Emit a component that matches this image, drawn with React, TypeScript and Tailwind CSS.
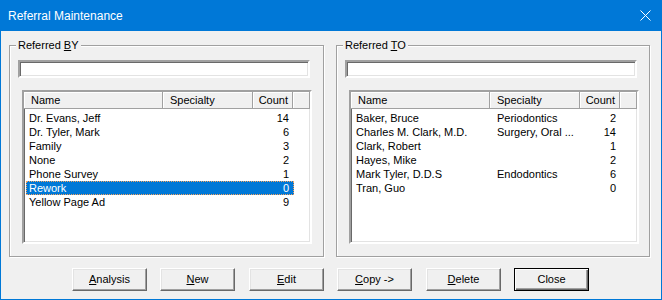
import React from "react";

type Row = { name: string; spec: string; count: string; selected?: boolean };

const leftRows: Row[] = [
  { name: "Dr. Evans, Jeff", spec: "", count: "14" },
  { name: "Dr. Tyler, Mark", spec: "", count: "6" },
  { name: "Family", spec: "", count: "3" },
  { name: "None", spec: "", count: "2" },
  { name: "Phone Survey", spec: "", count: "1" },
  { name: "Rework", spec: "", count: "0", selected: true },
  { name: "Yellow Page Ad", spec: "", count: "9" },
];

const rightRows: Row[] = [
  { name: "Baker, Bruce", spec: "Periodontics", count: "2" },
  { name: "Charles M. Clark, M.D.", spec: "Surgery, Oral ...", count: "14" },
  { name: "Clark, Robert", spec: "", count: "1" },
  { name: "Hayes, Mike", spec: "", count: "2" },
  { name: "Mark Tyler, D.D.S", spec: "Endodontics", count: "6" },
  { name: "Tran, Guo", spec: "", count: "0" },
];

const sunken =
  "border-2 border-t-[#a0a0a0] border-l-[#a0a0a0] border-r-white border-b-white shadow-[inset_1px_1px_0_#696969,inset_-1px_-1px_0_#e3e3e3]";

function ListView({ rows }: { rows: Row[] }) {
  const head =
    "h-[17px] flex items-center border-r border-b border-[#a0a0a0] shadow-[inset_1px_1px_0_#fff] bg-[#f0f0f0] leading-none";
  return (
    <div className={`ml-[12px] mt-[12px] w-[290px] h-[154px] bg-white ${sunken} flex flex-col`}>
      <div className="flex h-[17px] shrink-0">
        <div className={`${head} w-[139px] pl-[7px]`}>Name</div>
        <div className={`${head} w-[90px] pl-[7px]`}>Specialty</div>
        <div className={`${head} w-[40px] justify-end pr-[4px]`}>Count</div>
        <div className={`${head} flex-1`}></div>
      </div>
      <div className="pt-[2px] flex flex-col">
        {rows.map((r) => (
          <div
            key={r.name}
            className={`ml-[2px] w-[268px] h-[14px] flex items-center leading-none ${
              r.selected ? "bg-[#0078d7] text-white outline outline-1 outline-dotted outline-[#f7a35c] -outline-offset-1" : ""
            }`}
          >
            <div className="w-[137px] pl-[3px] whitespace-nowrap overflow-hidden">{r.name}</div>
            <div className="w-[90px] pl-[7px] whitespace-nowrap overflow-hidden">{r.spec}</div>
            <div className="w-[41px] text-right pr-[5px]">{r.count}</div>
          </div>
        ))}
      </div>
    </div>
  );
}

function Group({ label, rows, w }: { label: React.ReactNode; rows: Row[]; w: string }) {
  return (
    <div
      className={`relative ${w} h-[212px] border border-[#a0a0a0] shadow-[inset_1px_1px_0_#fff,1px_1px_0_#fff] flex flex-col`}
    >
      <div className="absolute left-[6px] top-[-8px] bg-[#f0f0f0] px-[2px] leading-[14px]">{label}</div>
      <div className={`ml-[8px] mt-[14px] w-[292px] h-[18px] bg-white ${sunken}`}></div>
      <ListView rows={rows} />
    </div>
  );
}

function Btn({ children, cls = "", def = false }: { children: React.ReactNode; cls?: string; def?: boolean }) {
  const base = def
    ? "border border-black shadow-[inset_1px_1px_0_#fff,inset_-1px_-1px_0_#696969,inset_-2px_-2px_0_#a0a0a0]"
    : "border border-t-white border-l-white border-r-[#696969] border-b-[#696969] shadow-[inset_-1px_-1px_0_#a0a0a0,inset_1px_1px_0_#e3e3e3]";
  return (
    <div className={`${cls} w-[75px] h-[23px] flex items-center justify-center bg-[#f0f0f0] leading-none ${base}`}>
      {children}
    </div>
  );
}

export default function App() {
  return (
    <div
      className="w-[662px] h-[300px] bg-[#0078d7] flex flex-col text-[11px] text-black"
      style={{ fontFamily: '"Liberation Sans", Arial, sans-serif' }}
    >
      <div className="h-[31px] shrink-0 flex items-center justify-between pl-[8px] pr-[11px] text-white text-[12px]">
        <span className="leading-none">Referral Maintenance</span>
        <svg width="11" height="11" viewBox="0 0 11 11" className="block">
          <path d="M0.5 0.5 L10.5 10.5 M10.5 0.5 L0.5 10.5" stroke="#fff" strokeWidth="1" fill="none" />
        </svg>
      </div>
      <div className="flex-1 mx-[1px] mb-[1px] bg-[#f0f0f0] flex flex-col">
        <div className="flex pl-[8px] pt-[14px] gap-[12px]">
          <Group
            w="w-[315px]"
            rows={leftRows}
            label={
              <span>
                Referred <span className="underline">B</span>Y
              </span>
            }
          />
          <Group
            w="w-[314px]"
            rows={rightRows}
            label={
              <span>
                Referred <span className="underline">T</span>O
              </span>
            }
          />
        </div>
        <div className="flex mt-[11px] pl-[71px]">
          <Btn>
            <span className="underline">A</span>nalysis
          </Btn>
          <Btn cls="ml-[13px]">
            <span className="underline">N</span>ew
          </Btn>
          <Btn cls="ml-[14px]">
            <span className="underline">E</span>dit
          </Btn>
          <Btn cls="ml-[13px]">
            <span className="underline">C</span>opy -&gt;
          </Btn>
          <Btn cls="ml-[14px]">
            <span className="underline">D</span>elete
          </Btn>
          <Btn cls="ml-[13px]" def>
            Close
          </Btn>
        </div>
      </div>
    </div>
  );
}
